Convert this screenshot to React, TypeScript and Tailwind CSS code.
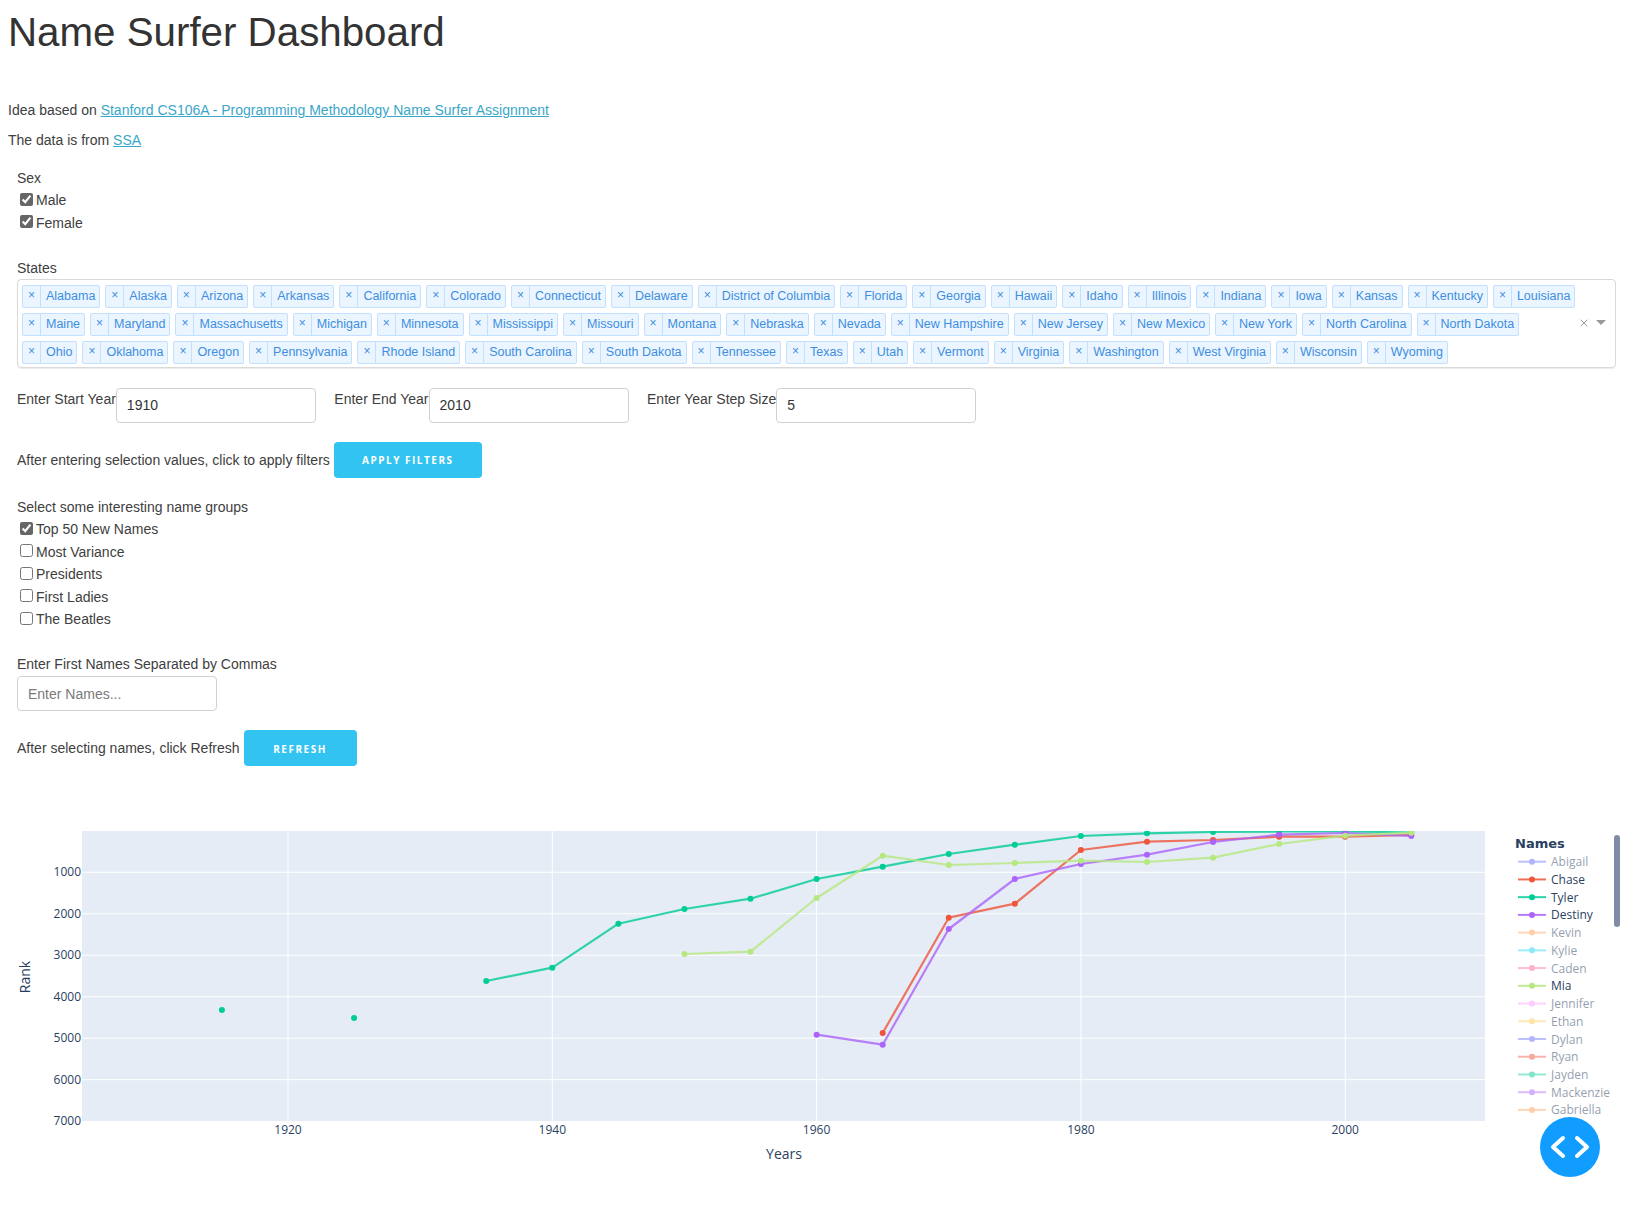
import React from "react";
import { X } from "lucide-react";

const states = ["Alabama","Alaska","Arizona","Arkansas","California","Colorado","Connecticut","Delaware","District of Columbia","Florida","Georgia","Hawaii","Idaho","Illinois","Indiana","Iowa","Kansas","Kentucky","Louisiana","Maine","Maryland","Massachusetts","Michigan","Minnesota","Mississippi","Missouri","Montana","Nebraska","Nevada","New Hampshire","New Jersey","New Mexico","New York","North Carolina","North Dakota","Ohio","Oklahoma","Oregon","Pennsylvania","Rhode Island","South Carolina","South Dakota","Tennessee","Texas","Utah","Vermont","Virginia","Washington","West Virginia","Wisconsin","Wyoming"];

const groups: [string, boolean][] = [["Top 50 New Names", true],["Most Variance", false],["Presidents", false],["First Ladies", false],["The Beatles", false]];

const px = (yr: number) => 288 + (yr - 1920) * 13.215;

type P = [number, number];
const tyler: P[][] = [
  [[1915, 1010]],
  [[1925, 1018]],
  [[1935, 981],[1940, 967.7],[1945, 923.7],[1950, 909],[1955, 898.7],[1960, 879],[1965, 866.7],[1970, 854],[1975, 844.7],[1980, 836],[1985, 833.3],[1990, 832],[1995, 831.5],[2000, 831.5],[2005, 832.5]],
];
const mia: P[] = [[1950,954],[1955,951.7],[1960,898],[1965,855.7],[1970,865],[1975,863],[1980,860.7],[1985,862],[1990,857.7],[1995,844],[2000,835.7],[2005,832.7]];
const chase: P[] = [[1965,1033],[1970,917.7],[1975,903.7],[1980,850],[1985,841.7],[1990,840],[1995,836.7],[2000,836.7],[2005,835]];
const destiny: P[] = [[1960,1034.7],[1965,1044.7],[1970,929],[1975,879],[1980,864],[1985,854.7],[1990,842],[1995,834.7],[2000,833],[2005,836]];

const legend: [string, string, boolean][] = [
  ["Abigail","#636efa",false],["Chase","#EF553B",true],["Tyler","#00cc96",true],["Destiny","#ab63fa",true],["Kevin","#FFA15A",false],["Kylie","#19d3f3",false],["Caden","#FF6692",false],["Mia","#B6E880",true],["Jennifer","#FF97FF",false],["Ethan","#FECB52",false],["Dylan","#636efa",false],["Ryan","#EF553B",false],["Jayden","#00cc96",false],["Mackenzie","#ab63fa",false],["Gabriella","#FFA15A",false],
];

function Series({ pts, color }: { pts: P[]; color: string }) {
  return (
    <g>
      {pts.length > 1 && (
        <polyline points={pts.map(([y, v]) => `${px(y)},${v}`).join(" ")} fill="none" stroke={color} strokeWidth={2.2} strokeOpacity={0.8} strokeLinejoin="round" />
      )}
      {pts.map(([y, v]) => (
        <circle key={y} cx={px(y)} cy={v} r={3} fill={color} />
      ))}
    </g>
  );
}

function Chart() {
  const tickFont = { fontFamily: "'Open Sans', sans-serif", fontSize: 12, fill: "#2a3f5f" };
  return (
    <svg viewBox="0 815 1633 393" width={1633} height={393} className="block">
      <defs>
        <clipPath id="plot"><rect x={82} y={831} width={1403} height={290} /></clipPath>
      </defs>
      <rect x={82} y={831} width={1403} height={290} fill="#E5ECF6" />
      {[1920, 1940, 1960, 1980, 2000].map((y) => (
        <g key={y}>
          <line x1={px(y)} x2={px(y)} y1={831} y2={1121} stroke="#fff" strokeWidth={1} />
          <text x={px(y)} y={1133.5} textAnchor="middle" {...tickFont}>{y}</text>
        </g>
      ))}
      {[1000, 2000, 3000, 4000, 5000, 6000, 7000].map((r) => {
        const y = 830.8 + r * 0.04148;
        return (
          <g key={r}>
            {r < 7000 && <line x1={82} x2={1485} y1={y} y2={y} stroke="#fff" strokeWidth={1} />}
            <text x={81} y={y + 4} textAnchor="end" {...tickFont}>{r}</text>
          </g>
        );
      })}
      <g clipPath="url(#plot)">
        {tyler.map((s, i) => <Series key={i} pts={s} color="#00cc96" />)}
        <Series pts={chase} color="#EF553B" />
        <Series pts={destiny} color="#ab63fa" />
        <Series pts={mia} color="#B6E880" />
      </g>
      <text x={30} y={977} textAnchor="middle" transform="rotate(-90 30 977)" fontFamily="'Open Sans', sans-serif" fontSize={14} fill="#2a3f5f">Rank</text>
      <text x={784} y={1159} textAnchor="middle" fontFamily="'Open Sans', sans-serif" fontSize={14} fill="#2a3f5f">Years</text>
      <text x={1515} y={848} fontFamily="'DejaVu Sans', sans-serif" fontWeight={700} fontSize={13} fill="#2a3f5f">Names</text>
      {legend.map(([n, c, on], i) => {
        const y = 861.7 + i * 17.73;
        return (
          <g key={n} opacity={on ? 1 : 0.5}>
            <line x1={1518} x2={1546} y1={y} y2={y} stroke={c} strokeWidth={2} strokeOpacity={0.85} />
            <circle cx={1532} cy={y} r={3} fill={c} />
            <text x={1551} y={y + 4.5} fontFamily="'Open Sans', sans-serif" fontSize={12} fill="#2a3f5f">{n}</text>
          </g>
        );
      })}
      <rect x={1614} y={835} width={6} height={92} rx={3} fill="#808BA5" />
    </svg>
  );
}

function Check({ label, checked }: { label: string; checked: boolean }) {
  return (
    <label className="flex items-center h-[22.4px] pl-[3px]">
      <input type="checkbox" defaultChecked={checked} className="w-[13px] h-[13px] m-0 mb-[2px] mr-[3px] accent-[#666666]" />
      <span>{label}</span>
    </label>
  );
}

function TextBox({ value, placeholder }: { value?: string; placeholder?: string }) {
  return (
    <input
      readOnly
      defaultValue={value}
      placeholder={placeholder}
      className="w-[200px] h-[35px] border border-[#d1d1d1] rounded-[4px] px-[10px] text-[14px] text-[#333] bg-white placeholder:text-[#7a7a7a] outline-none"
    />
  );
}

function ActionButton({ children, width }: { children: string; width: string }) {
  return (
    <button className={`${width} h-[36px] bg-[#33C3F0] rounded-[4px] text-white text-[10px] font-bold tracking-[1.5px] uppercase font-['Open_Sans',sans-serif] pt-[1px]`}>
      {children}
    </button>
  );
}

export default function App() {
  return (
    <div className="relative w-[1633px] h-[1208px] overflow-hidden bg-white text-[#404040] text-[14px] leading-[20px] font-['Liberation_Sans',Arial,sans-serif]">
      <h1 className="pt-[8px] pl-2 text-[40.3px] leading-[50px] font-normal text-[#333]">Name Surfer Dashboard</h1>
      <p className="mt-[42px] pl-2">
        Idea based on <a href="#" className="text-[#3aa7c9] underline">Stanford CS106A - Programming Methodology Name Surfer Assignment</a>
      </p>
      <p className="mt-[10px] pl-2">
        The data is from <a href="#" className="text-[#3aa7c9] underline">SSA</a>
      </p>

      <div className="pl-[17px] pr-[17px]">
        <div className="mt-[18px]">Sex</div>
        <div className="mt-[1px]">
          <Check label="Male" checked />
          <Check label="Female" checked />
        </div>

        <div className="mt-[24px]">States</div>
        <div className="mt-[1px] h-[89px] border border-[#d9d9d9] rounded-[4px] flex items-start shadow-[0_1px_1px_rgba(0,0,0,0.08)]">
          <div className="flex flex-wrap flex-1 pt-[5px] pl-[4px] gap-x-[5px] gap-y-[5px] pr-[2px] text-[12.5px] leading-[20px]">
            {states.map((s) => (
              <div key={s} className="flex h-[23px] border border-[#c2e0ff] bg-[#ebf5ff] text-[#3d8ee0] rounded-[2px]">
                <span className="w-[18px] flex items-center justify-center border-r border-[#c2e0ff] text-[12px] pb-[3px]">×</span>
                <span className="pl-[5px] pr-[4px] whitespace-nowrap">{s}</span>
              </div>
            ))}
          </div>
          <div className="flex items-center gap-[6px] w-[35px] mt-[37px] text-[#999]">
            <X size={12} strokeWidth={2} className="ml-[-2px]" />
            <span className="w-0 h-0 border-x-[5px] border-x-transparent border-t-[5px] border-t-[#999]" />
          </div>
        </div>

        <div className="mt-[20px] flex items-start">
          <span className="mt-[1px]">Enter Start Year</span>
          <TextBox value="1910" />
          <span className="mt-[1px] ml-[18.5px]">Enter End Year</span>
          <TextBox value="2010" />
          <span className="mt-[1px] ml-[18.5px]">Enter Year Step Size</span>
          <TextBox value="5" />
        </div>

        <div className="mt-[19px] flex items-center gap-[4px]">
          <span>After entering selection values, click to apply filters</span>
          <ActionButton width="w-[148px]">Apply Filters</ActionButton>
        </div>

        <div className="mt-[19.5px]">Select some interesting name groups</div>
        <div className="mt-[1px]">
          {groups.map(([l, c]) => <Check key={l} label={l} checked={c} />)}
        </div>

        <div className="mt-[24px]">Enter First Names Separated by Commas</div>
        <div className="mt-[2px]">
          <TextBox placeholder="Enter Names..." />
        </div>

        <div className="mt-[19px] flex items-center gap-[4px]">
          <span>After selecting names, click Refresh</span>
          <ActionButton width="w-[113px]">Refresh</ActionButton>
        </div>
      </div>

      <div className="mt-[49px]">
        <Chart />
      </div>

      <div className="absolute right-[33px] bottom-[31px] w-[60px] h-[60px] rounded-full bg-[#119DFF] flex items-center justify-center">
        <svg width="40" height="24" viewBox="0 0 40 24" fill="none" stroke="#fff" strokeWidth="4" strokeLinecap="round" strokeLinejoin="round">
          <path d="M13 3 L3 12 L13 21" />
          <path d="M27 3 L37 12 L27 21" />
        </svg>
      </div>
    </div>
  );
}
